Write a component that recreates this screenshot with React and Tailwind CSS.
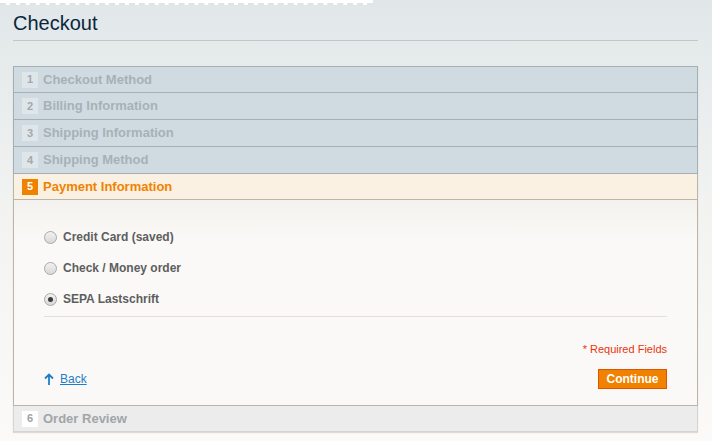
export default function App() {
  const steps = [
    { n: 1, label: 'Checkout Method' },
    { n: 2, label: 'Billing Information' },
    { n: 3, label: 'Shipping Information' },
    { n: 4, label: 'Shipping Method' },
  ];
  const methods = [
    { label: 'Credit Card (saved)', checked: false },
    { label: 'Check / Money order', checked: false },
    { label: 'SEPA Lastschrift', checked: true },
  ];

  return (
    <div
      className="w-[712px] h-[441px] overflow-hidden bg-gradient-to-b from-[#e1e7e9] via-[#f3f4f2] to-[#fbfaf8]"
      style={{ fontFamily: '"Liberation Sans", Arial, sans-serif' }}
    >
      {/* dotted strip at the very top */}
      <div className="w-[373px] h-[5px] bg-white border-b-2 border-dashed border-[#dfe4e5]" />

      <div className="px-[13px] pt-[6px]">
        <h1 className="text-[20px] leading-[25px] text-[#0a263c] pb-[4px] border-b border-[#c3c6c5] w-[685px]">
          Checkout
        </h1>

        <div className="mt-[25px] w-[685px] shadow-[0_1px_1px_rgba(0,0,0,0.12)]">
          {steps.map((s, i) => (
            <div
              key={s.n}
              className={`h-[27px] flex items-center bg-[#d0dbe1] border-x border-b border-[#a5afb4] ${i === 0 ? 'border-t' : ''}`}
            >
              <span className="ml-[8px] w-[16px] h-[16px] bg-[#dfe6ea] text-[#9fa9af] text-[11px] font-bold flex items-center justify-center">
                {s.n}
              </span>
              <span className="ml-[5px] text-[13px] font-bold text-[#a6b1b7]">{s.label}</span>
            </div>
          ))}

          <div className="h-[26px] flex items-center bg-[#faf1e2] border-x border-b border-[#bcb4a4]">
            <span className="ml-[8px] w-[16px] h-[16px] bg-[#f18200] text-white text-[11px] font-bold flex items-center justify-center">
              5
            </span>
            <span className="ml-[5px] text-[13px] font-bold text-[#f18200]">Payment Information</span>
          </div>

          <div className="h-[206px] border-x border-b border-[#bcb4a4] bg-gradient-to-b from-[#f3f2ee] to-[#faf9f7] to-[20%] px-[30px] pt-[30px]">
            <div className="flex flex-col gap-[17px] pb-[10px] border-b border-[#e4e0d9]">
              {methods.map((m) => (
                <label key={m.label} className="flex items-center h-[14px]">
                  <span className="w-[13px] h-[13px] rounded-full border border-[#a9a9a9] bg-gradient-to-b from-[#f2f2f2] to-[#d8d8d8] flex items-center justify-center">
                    {m.checked && <span className="w-[5px] h-[5px] rounded-full bg-[#3c3c3c]" />}
                  </span>
                  <span className="ml-[6px] text-[12px] font-bold text-[#5e5e5e]">{m.label}</span>
                </label>
              ))}
            </div>

            <div className="text-right text-[11px] text-[#eb340a] mt-[26px] leading-[13px]">* Required Fields</div>

            <div className="flex items-center justify-between mt-[13px]">
              <a className="flex items-center text-[12px] text-[#1e7ec8] underline">
                <svg width="10" height="13" viewBox="0 0 10 13" className="mr-[6px]">
                  <path d="M5 12V2M1 5.5L5 1.5L9 5.5" fill="none" stroke="#1e7ec8" strokeWidth="1.8" />
                </svg>
                Back
              </a>
              <button className="w-[69px] h-[20px] bg-[#f18200] border border-[#de5400] text-white text-[12px] font-bold leading-none">
                Continue
              </button>
            </div>
          </div>

          <div className="h-[26px] flex items-center bg-[#ececec] border-x border-b border-[#d4d4d4]">
            <span className="ml-[8px] w-[16px] h-[16px] bg-white text-[#9ea3a6] text-[11px] font-bold flex items-center justify-center">
              6
            </span>
            <span className="ml-[5px] text-[13px] font-bold text-[#a2a5a8]">Order Review</span>
          </div>
        </div>
      </div>
    </div>
  );
}
